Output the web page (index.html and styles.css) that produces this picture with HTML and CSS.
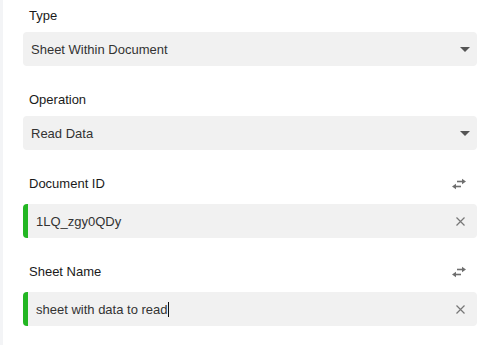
FILE: index.html
```html
<!DOCTYPE html>
<html lang="en">
<head>
  <meta charset="UTF-8" />
  <meta name="viewport" content="width=device-width, initial-scale=1.0" />
  <title>Sheet Settings</title>
  <link rel="stylesheet" href="styles.css">
</head>
<body>
  <div class="panel">
    <div class="field">
      <div class="field-head"><label>Type</label></div>
      <div class="select">
        <span>Sheet Within Document</span>
        <svg class="caret" width="10" height="5" viewBox="0 0 10 5"><polygon points="0,0 10,0 5,5" /></svg>
      </div>
    </div>

    <div class="field">
      <div class="field-head"><label>Operation</label></div>
      <div class="select">
        <span>Read Data</span>
        <svg class="caret" width="10" height="5" viewBox="0 0 10 5"><polygon points="0,0 10,0 5,5" /></svg>
      </div>
    </div>

    <div class="field field-input">
      <div class="field-head">
        <label>Document ID</label>
        <svg class="swap" width="16" height="12" viewBox="0 0 16 12">
          <line x1="6" y1="3.5" x2="12" y2="3.5" />
          <polygon points="11,0.8 15,3.5 11,6.2" />
          <line x1="4" y1="8.5" x2="10" y2="8.5" />
          <polygon points="5,5.8 1,8.5 5,11.2" />
        </svg>
      </div>
      <div class="input">
        <span class="value">1LQ_zgy0QDy</span>
        <svg class="clear" width="9" height="9" viewBox="0 0 9 9"><path d="M0.5 0.5 L8.5 8.5 M8.5 0.5 L0.5 8.5" /></svg>
      </div>
    </div>

    <div class="field field-input">
      <div class="field-head">
        <label>Sheet Name</label>
        <svg class="swap" width="16" height="12" viewBox="0 0 16 12">
          <line x1="6" y1="3.5" x2="12" y2="3.5" />
          <polygon points="11,0.8 15,3.5 11,6.2" />
          <line x1="4" y1="8.5" x2="10" y2="8.5" />
          <polygon points="5,5.8 1,8.5 5,11.2" />
        </svg>
      </div>
      <div class="input">
        <span class="value typing">sheet with data to read</span>
        <svg class="clear" width="9" height="9" viewBox="0 0 9 9"><path d="M0.5 0.5 L8.5 8.5 M8.5 0.5 L0.5 8.5" /></svg>
      </div>
    </div>
  </div>
</body>
</html>
```

FILE: styles.css
```css
:root {
  --box-bg: #f1f1f1;
  --label: #1a1a1a;
  --text: #333;
  --icon: #6e6e6e;
  --ok: #22b622;
  --edge: #f3f4f6;
}
html, body { margin: 0; padding: 0; }
body {
  background: #fff;
  border-left: 3px solid var(--edge);
  min-height: 100vh;
  box-sizing: border-box;
  font-family: "Liberation Sans", Arial, sans-serif;
  font-size: 13px;
}
.panel { padding: 8px 18px 0 20px; }
.field { margin-bottom: 26px; }
.field-head {
  display: flex;
  justify-content: space-between;
  align-items: center;
  height: 16px;
  margin-bottom: 8px;
  padding-left: 6px;
}
.field-input .field-head { margin-bottom: 12px; padding-right: 10px; }
label { color: var(--label); line-height: 16px; }
.select, .input {
  display: flex;
  justify-content: space-between;
  align-items: center;
  height: 34px;
  box-sizing: border-box;
  background: var(--box-bg);
  border-radius: 4px;
  color: var(--text);
}
.select { padding: 0 7px 0 8px; }
.input {
  border-left: 5px solid var(--ok);
  padding: 0 12px 0 8px;
}
.caret polygon { fill: #555; }
.swap line { stroke: var(--icon); stroke-width: 1.6; }
.swap polygon { fill: var(--icon); }
.clear path { stroke: #777; stroke-width: 1.2; fill: none; }
.typing { border-right: 1px solid #111; }
```
